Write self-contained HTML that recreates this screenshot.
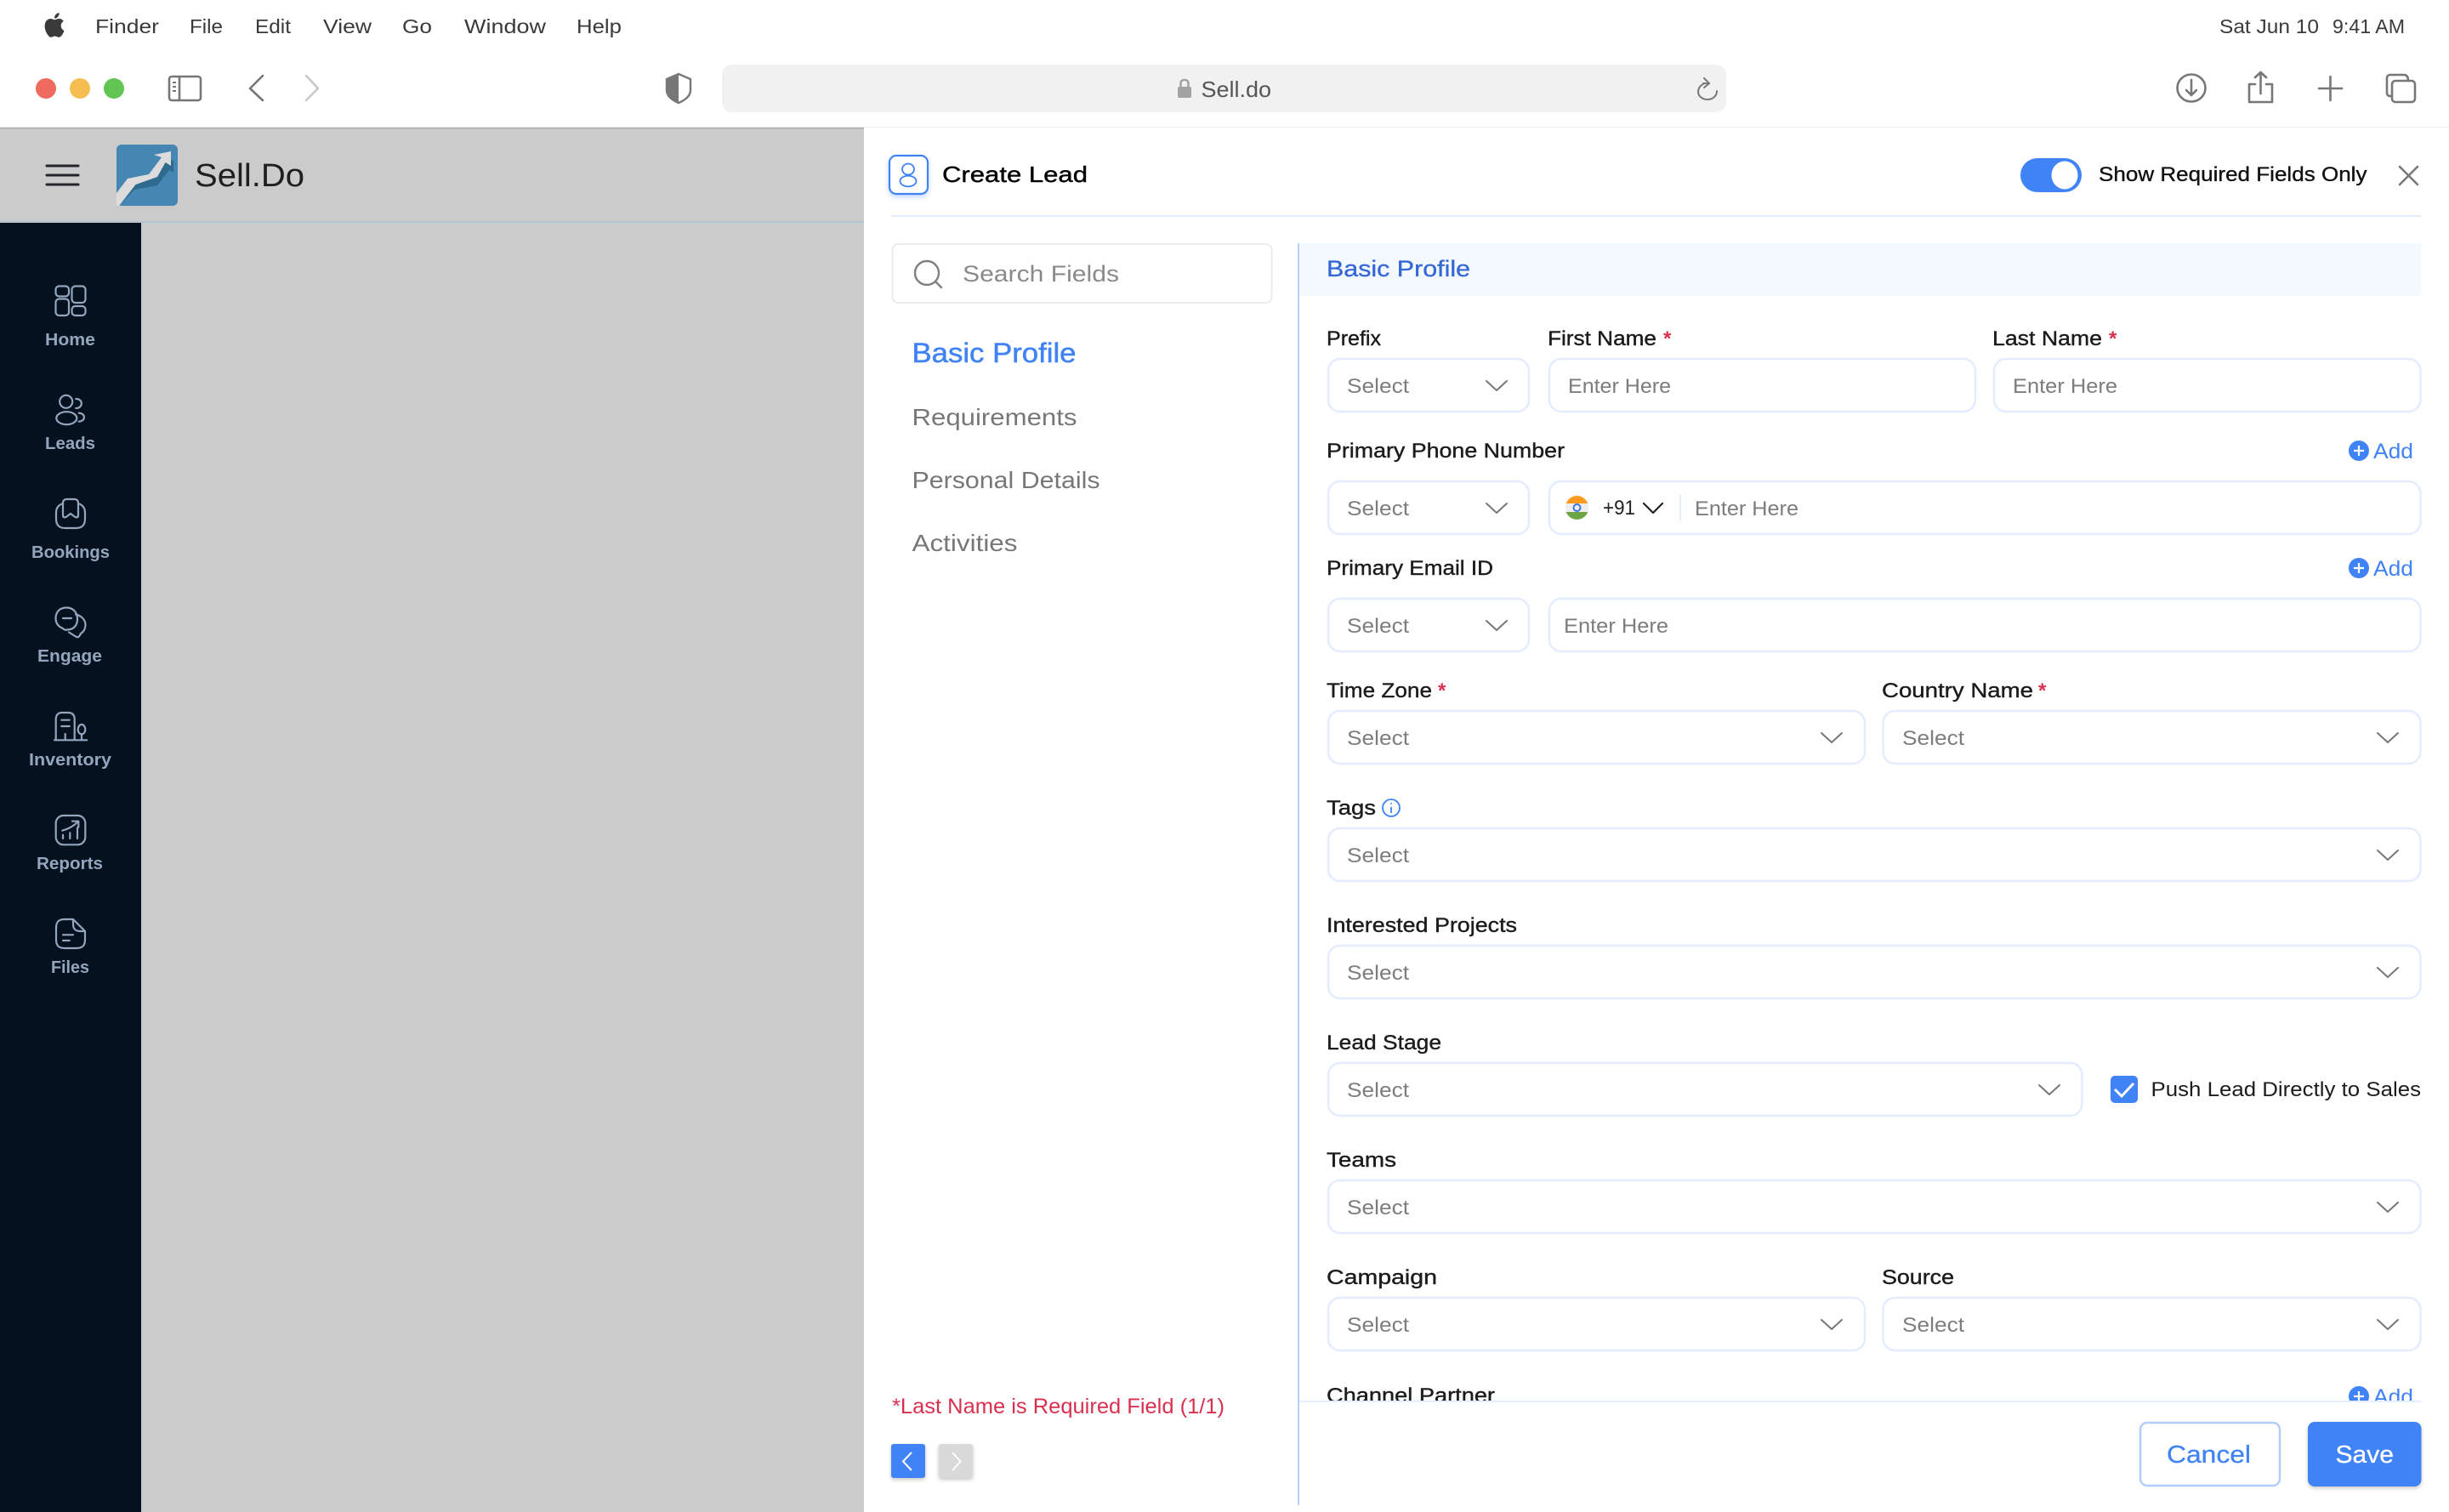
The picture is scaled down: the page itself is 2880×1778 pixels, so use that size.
<!DOCTYPE html>
<html><head><meta charset="utf-8"><title>Create Lead</title>
<style>
html,body{margin:0;padding:0;background:#fff;width:2880px;height:1778px;overflow:hidden}
svg{display:block}
text{font-family:"Liberation Sans",sans-serif;white-space:pre}
.m{font-size:23px;fill:#3a3a3a}
.sb{font-size:20px;font-weight:700;fill:#93a6bd}
.l{font-size:24px;fill:#1c1c1c;stroke:#1c1c1c;stroke-width:.4;transform:translate(-1px,0)}
.s{font-size:24px;fill:#7d7d7d;transform:translate(-1px,0)}
.st{font-size:24px;font-weight:700;fill:#d9304f}
.nav{font-size:28px;fill:#777;transform:translate(-.5px,0)}
.add{font-size:25px;fill:#4083f7}
.b{fill:#fff;stroke:#e3edff;stroke-width:2.5}
.i{fill:none;stroke:#93a6bd;stroke-width:2.2;stroke-linecap:round;stroke-linejoin:round}
.t{fill:none;stroke:#777;stroke-width:2.6;stroke-linecap:round;stroke-linejoin:round}
</style></head><body>
<svg xmlns="http://www.w3.org/2000/svg" width="2880" height="1778" viewBox="0 0 2880 1778">
<defs>
<path id="ch" d="M0 0L12 11L24 0" fill="none" stroke="#777" stroke-width="2" stroke-linecap="round" stroke-linejoin="round"/>
<g id="pl"><circle r="12" fill="#4083f7"/><path d="M-6 0H6M0-6V6" stroke="#fff" stroke-width="2.2"/></g>
<filter id="sh" x="-30%" y="-30%" width="160%" height="170%"><feDropShadow dx="0" dy="2" stdDeviation="2.5" flood-color="#000" flood-opacity=".22"/></filter>
<filter id="shb" x="-30%" y="-30%" width="160%" height="170%"><feDropShadow dx="0" dy="3" stdDeviation="3" flood-color="#4083f7" flood-opacity=".3"/></filter>
<clipPath id="flag"><ellipse cx="1854.5" cy="597" rx="13.7" ry="14"/></clipPath>
<clipPath id="scroll"><rect x="1530" y="1500" width="1320" height="148"/></clipPath>
</defs>
<rect width="2880" height="1778" fill="#fff"/>

<!-- menu bar -->
<path transform="translate(50 15) scale(1.17 1.2)" fill="#3a3a3a" d="M12.152 6.896c-.948 0-2.415-1.078-3.96-1.04-2.04.027-3.91 1.183-4.961 3.014-2.117 3.675-.546 9.103 1.519 12.09 1.013 1.454 2.208 3.09 3.792 3.039 1.52-.065 2.09-.987 3.935-.987 1.831 0 2.35.987 3.96.948 1.637-.026 2.676-1.48 3.676-2.948 1.156-1.688 1.636-3.325 1.662-3.415-.039-.013-3.182-1.221-3.22-4.857-.026-3.04 2.48-4.494 2.597-4.559-1.429-2.09-3.623-2.324-4.39-2.376-2-.156-3.675 1.09-4.61 1.09zM15.53 3.83c.843-1.012 1.4-2.427 1.245-3.83-1.207.052-2.662.805-3.532 1.818-.78.896-1.454 2.338-1.273 3.714 1.338.104 2.715-.688 3.559-1.701"/>
<text class="m" x="112" y="39" textLength="75" lengthAdjust="spacingAndGlyphs">Finder</text>
<text class="m" x="223" y="39" textLength="39" lengthAdjust="spacingAndGlyphs">File</text>
<text class="m" x="300" y="39" textLength="42" lengthAdjust="spacingAndGlyphs">Edit</text>
<text class="m" x="380" y="39" textLength="57" lengthAdjust="spacingAndGlyphs">View</text>
<text class="m" x="473" y="39" textLength="35" lengthAdjust="spacingAndGlyphs">Go</text>
<text class="m" x="546" y="39" textLength="96" lengthAdjust="spacingAndGlyphs">Window</text>
<text class="m" x="678" y="39" textLength="53" lengthAdjust="spacingAndGlyphs">Help</text>
<text class="m" x="2610" y="39" textLength="117" lengthAdjust="spacingAndGlyphs">Sat Jun 10</text>
<text class="m" x="2743" y="39" textLength="85" lengthAdjust="spacingAndGlyphs">9:41 AM</text>

<!-- toolbar -->
<circle cx="54" cy="104" r="12" fill="#ef6b60"/><circle cx="94" cy="104" r="12" fill="#f6be50"/><circle cx="134" cy="104" r="12" fill="#61c554"/>
<rect x="199" y="90" width="37" height="28" rx="3" class="t"/><path d="M211 90V118" class="t"/>
<path d="M203 97H207M203 102H207M203 107H207" stroke="#777" stroke-width="2"/>
<path d="M309 89L294 104L309 118" class="t"/>
<path d="M360 89L374 104L360 118" fill="none" stroke="#c8c8c8" stroke-width="2.6" stroke-linecap="round" stroke-linejoin="round"/>
<path d="M798 87L812 93V106C812 113 805 118 798 121C791 118 784 113 784 106V93Z" fill="#fff" stroke="#777" stroke-width="2.4"/>
<path d="M798 87L784 93V106C784 113 791 118 798 121Z" fill="#777"/>
<rect x="849" y="76" width="1181" height="56" rx="12" fill="#f1f1f1"/>
<rect x="1385" y="102" width="16" height="13" rx="2" fill="#a2a2a2"/>
<path d="M1388.500 102V98C1388.500 92.500 1397.500 92.500 1397.500 98V102" fill="none" stroke="#a2a2a2" stroke-width="2.500"/>
<text x="1412.500" y="114" font-size="26" fill="#555" textLength="82.500" lengthAdjust="spacingAndGlyphs">Sell.do</text>
<path d="M2003 99C1998 101 1997 106 1997 108C1997 113 2002 117 2008 117C2014 117 2019 113 2019 107M2004 92L2010 98L2004 103M2009 98H2003" fill="none" stroke="#777" stroke-width="2" stroke-linecap="round"/>
<ellipse cx="2577" cy="103.500" rx="16.500" ry="16" class="t"/>
<path d="M2577 94V112M2571 106L2577 112L2583 106" class="t"/>
<path d="M2652 99H2645V120H2672V99H2665M2658.500 110V85M2652 91L2658.500 85L2665 91" class="t"/>
<path d="M2727 104H2754M2740.500 90V118" class="t"/>
<rect x="2813" y="95" width="27" height="25" rx="4" class="t"/>
<path d="M2813 113H2811C2808 113 2807 111 2807 109V92C2807 89 2809 88 2811 88H2827C2830 88 2832 90 2832 95" class="t"/>
<rect y="149" width="2880" height="1.500" fill="#ececec"/>

<!-- app bg -->
<rect y="150" width="1016" height="1628" fill="#cbcbcb"/>
<rect y="150" width="1016" height="1.500" fill="#aeaeae"/>
<rect y="260" width="1016" height="2" fill="#b4c4cf"/>
<rect y="262" width="166" height="1516" fill="#06111f"/>
<path d="M55 195H92M55 206H92M55 217H92" stroke="#22262b" stroke-width="3" stroke-linecap="round"/>
<rect x="137" y="170" width="72" height="72" rx="6" fill="#4586b3"/>
<path d="M140 242L158 223L185 218L199 200L204 203V188L194.500 191L185 208L159.500 217Z" fill="#2e6a8e"/>
<path d="M137 227L150 210L175 205L190 185L181 182L201 178V195L194.500 191L185 208L159.500 217L140 242H137Z" fill="#dcdcdc"/>
<text x="229" y="219" font-size="38" fill="#1f1f1f" textLength="129" lengthAdjust="spacingAndGlyphs">Sell.Do</text>

<!-- sidebar -->
<rect x="65.500" y="336.500" width="15.500" height="12" rx="4" class="i"/><rect x="65.500" y="351.500" width="15.500" height="19.500" rx="4" class="i"/><rect x="84.500" y="336.500" width="16" height="19.500" rx="4" class="i"/><rect x="84.500" y="360" width="16" height="11" rx="4" class="i"/>
<text class="sb" x="53" y="406" textLength="59" lengthAdjust="spacingAndGlyphs">Home</text>
<circle cx="77.700" cy="472.300" r="7.500" class="i"/><ellipse cx="78.300" cy="491.700" rx="12" ry="7.500" class="i"/>
<path d="M89.300 469C98 469 98 480 89.300 480M92.700 485.700C101 486 101 495.500 92.700 495.700" class="i"/>
<text class="sb" x="53" y="528" textLength="59" lengthAdjust="spacingAndGlyphs">Leads</text>
<path d="M74 592C68 594 66 598 66 603V610C66 618 70 621 77 621H89C96 621 100 618 100 610V603C100 598 98 594 92 592" class="i"/>
<path d="M74 606V592C74 588 76 587 79 587H87C90 587 92 588 92 592V606C92 609 89 609 87 607L83 604L79 607C77 609 74 609 74 606Z" class="i"/>
<text class="sb" x="37" y="656" textLength="92" lengthAdjust="spacingAndGlyphs">Bookings</text>
<path d="M78 714.500C70 714.500 65.500 720 65.500 727C65.500 733 69 737 74 739C75.500 741 77 741 79 740.500C87 740.500 91 735 91 728C91 720 86 714.500 78 714.500Z" class="i"/>
<path d="M74 727H84" class="i"/>
<path d="M89 722.500C96 724 100.500 729 100.500 735C100.500 739 98.500 743 95 745C93 749.500 91 750 89 748.500L81 743.500" class="i"/>
<text class="sb" x="44" y="778" textLength="76" lengthAdjust="spacingAndGlyphs">Engage</text>
<path d="M65.700 870V846C65.700 840 69 838 73 838H80C84.500 838 87.700 840 87.700 846V870M64 870.300H102.300M72.300 846.700H81.700M72.300 854H81.700M76.700 863V870M96 863.500V870" class="i"/>
<ellipse cx="96" cy="857.700" rx="4.300" ry="5.700" class="i"/>
<text class="sb" x="34" y="900" textLength="97" lengthAdjust="spacingAndGlyphs">Inventory</text>
<rect x="65.700" y="959" width="34.600" height="34.300" rx="9" class="i"/>
<path d="M73.300 976.700C80 975 87 971 92 966M85 965.700H92.300V972.700M74 981.700V986M82.300 979.300V986M91 973.300V986" class="i"/>
<text class="sb" x="43" y="1022" textLength="78" lengthAdjust="spacingAndGlyphs">Reports</text>
<path d="M86 1081H76C69 1081 66 1084 66 1091V1105C66 1112 69 1115 76 1115H90C97 1115 100 1112 100 1105V1095ZM86 1081V1087C86 1092 89 1095 94 1095H100M74 1099.300H86M74 1106H81.700" class="i"/>
<text class="sb" x="60" y="1144" textLength="45" lengthAdjust="spacingAndGlyphs">Files</text>

<!-- panel -->
<rect x="1016" y="150" width="1864" height="1628" fill="#fff"/>
<rect x="1046" y="183" width="45" height="45" rx="8" fill="#fff" stroke="#4083f7" stroke-width="2.200" filter="url(#shb)"/>
<ellipse cx="1068" cy="199" rx="7" ry="6.500" fill="none" stroke="#4083f7" stroke-width="1.800"/>
<ellipse cx="1068" cy="213" rx="9.500" ry="6.300" fill="none" stroke="#4083f7" stroke-width="1.800"/>
<text x="1108" y="214" font-size="26" fill="#000" stroke="#000" stroke-width=".4" textLength="171" lengthAdjust="spacingAndGlyphs">Create Lead</text>
<rect x="2376" y="186" width="72" height="40" rx="20" fill="#4083f7"/>
<ellipse cx="2428" cy="206" rx="15.500" ry="16.500" fill="#fff"/>
<text x="2468" y="213" font-size="24" fill="#111" stroke="#111" stroke-width=".35" textLength="315.500" lengthAdjust="spacingAndGlyphs">Show Required Fields Only</text>
<path d="M2822 196L2843 217M2843 196L2822 217" class="t"/>
<rect x="1048" y="253" width="1799" height="2" fill="#e3edff"/>
<rect x="1049.500" y="287" width="446" height="69" rx="7" fill="#fff" stroke="#ececec" stroke-width="2"/>
<ellipse cx="1090" cy="321" rx="14" ry="14" fill="none" stroke="#808080" stroke-width="2.400"/>
<path d="M1100 331L1107 338" stroke="#808080" stroke-width="2.400" stroke-linecap="round"/>
<text x="1132" y="331" font-size="27" fill="#8a8a8a" textLength="184" lengthAdjust="spacingAndGlyphs">Search Fields</text>
<text x="1072.500" y="426" font-size="32" fill="#4083f7" stroke="#4083f7" stroke-width=".5" textLength="193" lengthAdjust="spacingAndGlyphs">Basic Profile</text>
<text class="nav" x="1073" y="500" textLength="194" lengthAdjust="spacingAndGlyphs">Requirements</text>
<text class="nav" x="1073" y="574" textLength="221" lengthAdjust="spacingAndGlyphs">Personal Details</text>
<text class="nav" x="1073" y="648" textLength="124" lengthAdjust="spacingAndGlyphs">Activities</text>
<text x="1049" y="1662" font-size="25" fill="#d9304f" textLength="391" lengthAdjust="spacingAndGlyphs">*Last Name is Required Field (1/1)</text>
<rect x="1048" y="1698" width="40" height="40" rx="3" fill="#4083f7" filter="url(#sh)"/>
<path d="M1072 1708L1062 1718.500L1072 1729" fill="none" stroke="#fff" stroke-width="2"/>
<rect x="1104" y="1698" width="40" height="40" rx="3" fill="#d9d9d9" filter="url(#sh)"/>
<path d="M1120 1708L1129.500 1718.500L1120 1729" fill="none" stroke="#fff" stroke-width="2"/>

<rect x="1526" y="286" width="2" height="1484" fill="#b9d0f7"/>
<rect x="1528" y="286" width="1319" height="62" fill="#f4f8ff"/>
<text x="1560" y="325" font-size="27" fill="#3568d4" stroke="#3568d4" stroke-width=".35" textLength="169" lengthAdjust="spacingAndGlyphs">Basic Profile</text>

<!-- Row 1 -->
<text class="l" x="1561" y="406" textLength="64" lengthAdjust="spacingAndGlyphs">Prefix</text>
<text class="l" x="1821" y="406" textLength="128" lengthAdjust="spacingAndGlyphs">First Name</text><text class="st" x="1956" y="406">*</text>
<text class="l" x="2344" y="406" textLength="129" lengthAdjust="spacingAndGlyphs">Last Name</text><text class="st" x="2480" y="406">*</text>
<rect class="b" x="1562" y="422" width="236" height="62" rx="14"/>
<text class="s" x="1585" y="462" textLength="73" lengthAdjust="spacingAndGlyphs">Select</text><use href="#ch" x="1748" y="448"/>
<rect class="b" x="1822" y="422" width="501" height="62" rx="14"/>
<text class="s" x="1845" y="462" textLength="121" lengthAdjust="spacingAndGlyphs">Enter Here</text>
<rect class="b" x="2345" y="422" width="501.500" height="62" rx="14"/>
<text class="s" x="2368" y="462" textLength="123" lengthAdjust="spacingAndGlyphs">Enter Here</text>

<!-- Phone -->
<text class="l" x="1561" y="538" textLength="280" lengthAdjust="spacingAndGlyphs">Primary Phone Number</text>
<use href="#pl" x="2774" y="530"/><text class="add" x="2791" y="539" textLength="47" lengthAdjust="spacingAndGlyphs">Add</text>
<rect class="b" x="1562" y="566" width="236" height="62" rx="14"/>
<text class="s" x="1585" y="606" textLength="73" lengthAdjust="spacingAndGlyphs">Select</text><use href="#ch" x="1748" y="592"/>
<rect class="b" x="1822" y="566" width="1024.500" height="62" rx="14"/>
<g clip-path="url(#flag)"><rect x="1840" y="583" width="29" height="29" fill="#eee"/><rect x="1840" y="583" width="29" height="9" fill="#ff9a1f"/><rect x="1840" y="602" width="29" height="10" fill="#6da544"/></g>
<circle cx="1854.500" cy="597" r="4" fill="none" stroke="#3b78e0" stroke-width="2"/>
<text x="1885" y="605" font-size="24" fill="#222" textLength="38" lengthAdjust="spacingAndGlyphs">+91</text>
<path d="M1933 592L1944 603L1955 592" fill="none" stroke="#222" stroke-width="2.200" stroke-linecap="round" stroke-linejoin="round"/>
<rect x="1975" y="582" width="2" height="31" fill="#e3edff"/>
<text class="s" x="1994" y="606" textLength="122" lengthAdjust="spacingAndGlyphs">Enter Here</text>

<!-- Email -->
<text class="l" x="1561" y="676" textLength="196" lengthAdjust="spacingAndGlyphs">Primary Email ID</text>
<use href="#pl" x="2774" y="668"/><text class="add" x="2791" y="677" textLength="47" lengthAdjust="spacingAndGlyphs">Add</text>
<rect class="b" x="1562" y="704" width="236" height="62" rx="14"/>
<text class="s" x="1585" y="744" textLength="73" lengthAdjust="spacingAndGlyphs">Select</text><use href="#ch" x="1748" y="730"/>
<rect class="b" x="1822" y="704" width="1024.500" height="62" rx="14"/>
<text class="s" x="1840" y="744" textLength="123" lengthAdjust="spacingAndGlyphs">Enter Here</text>

<!-- Time zone / Country -->
<text class="l" x="1561" y="820" textLength="124" lengthAdjust="spacingAndGlyphs">Time Zone</text><text class="st" x="1691" y="820">*</text>
<text class="l" x="2214" y="820" textLength="178" lengthAdjust="spacingAndGlyphs">Country Name</text><text class="st" x="2397" y="820">*</text>
<rect class="b" x="1562" y="836" width="631" height="62" rx="14"/>
<text class="s" x="1585" y="876" textLength="73" lengthAdjust="spacingAndGlyphs">Select</text><use href="#ch" x="2142" y="862"/>
<rect class="b" x="2214.500" y="836" width="632" height="62" rx="14"/>
<text class="s" x="2238" y="876" textLength="73" lengthAdjust="spacingAndGlyphs">Select</text><use href="#ch" x="2796" y="862"/>

<!-- Tags -->
<text class="l" x="1561" y="958" textLength="58" lengthAdjust="spacingAndGlyphs">Tags</text>
<circle cx="1636" cy="950" r="10" fill="none" stroke="#4083f7" stroke-width="1.800"/>
<path d="M1636 949V956M1636 944V945.500" stroke="#4083f7" stroke-width="1.800"/>
<rect class="b" x="1562" y="974" width="1284.500" height="62" rx="14"/>
<text class="s" x="1585" y="1014" textLength="73" lengthAdjust="spacingAndGlyphs">Select</text><use href="#ch" x="2796" y="1000"/>

<!-- Projects -->
<text class="l" x="1561" y="1096" textLength="224" lengthAdjust="spacingAndGlyphs">Interested Projects</text>
<rect class="b" x="1562" y="1112" width="1284.500" height="62" rx="14"/>
<text class="s" x="1585" y="1152" textLength="73" lengthAdjust="spacingAndGlyphs">Select</text><use href="#ch" x="2796" y="1138"/>

<!-- Lead stage -->
<text class="l" x="1561" y="1234" textLength="135" lengthAdjust="spacingAndGlyphs">Lead Stage</text>
<rect class="b" x="1562" y="1250" width="886.500" height="62" rx="14"/>
<text class="s" x="1585" y="1290" textLength="73" lengthAdjust="spacingAndGlyphs">Select</text><use href="#ch" x="2398" y="1276"/>
<rect x="2482" y="1265" width="32" height="32" rx="5" fill="#4083f7"/>
<path d="M2487 1281L2495 1289L2509 1274" fill="none" stroke="#fff" stroke-width="3"/>
<text x="2529.500" y="1289" font-size="24" fill="#1c1c1c" textLength="317.500" lengthAdjust="spacingAndGlyphs">Push Lead Directly to Sales</text>

<!-- Teams -->
<text class="l" x="1561" y="1372" textLength="82" lengthAdjust="spacingAndGlyphs">Teams</text>
<rect class="b" x="1562" y="1388" width="1284.500" height="62" rx="14"/>
<text class="s" x="1585" y="1428" textLength="73" lengthAdjust="spacingAndGlyphs">Select</text><use href="#ch" x="2796" y="1414"/>

<!-- Campaign / Source -->
<text class="l" x="1561" y="1510" textLength="130" lengthAdjust="spacingAndGlyphs">Campaign</text>
<text class="l" x="2214" y="1510" textLength="85" lengthAdjust="spacingAndGlyphs">Source</text>
<rect class="b" x="1562" y="1526" width="631" height="62" rx="14"/>
<text class="s" x="1585" y="1566" textLength="73" lengthAdjust="spacingAndGlyphs">Select</text><use href="#ch" x="2142" y="1552"/>
<rect class="b" x="2214.500" y="1526" width="632" height="62" rx="14"/>
<text class="s" x="2238" y="1566" textLength="73" lengthAdjust="spacingAndGlyphs">Select</text><use href="#ch" x="2796" y="1552"/>

<!-- Channel partner -->
<g clip-path="url(#scroll)">
<text class="l" x="1561" y="1649" textLength="198" lengthAdjust="spacingAndGlyphs">Channel Partner</text>
<use href="#pl" x="2774" y="1642"/><text class="add" x="2791" y="1651" textLength="47" lengthAdjust="spacingAndGlyphs">Add</text>
</g>
<rect x="1528" y="1647" width="1319" height="2" fill="#e3edff"/>

<!-- Buttons -->
<rect x="2517" y="1673" width="164" height="74" rx="8" fill="#fff" stroke="#b3cdfb" stroke-width="2.500"/>
<text x="2548" y="1720" font-size="29" fill="#4083f7" stroke="#4083f7" stroke-width=".3" textLength="99" lengthAdjust="spacingAndGlyphs">Cancel</text>
<rect x="2714" y="1672" width="133.500" height="76" rx="8" fill="#4083f7" filter="url(#sh)"/>
<text x="2746.500" y="1720" font-size="29" fill="#fff" stroke="#fff" stroke-width=".3" textLength="68.500" lengthAdjust="spacingAndGlyphs">Save</text>
</svg>
</body></html>
